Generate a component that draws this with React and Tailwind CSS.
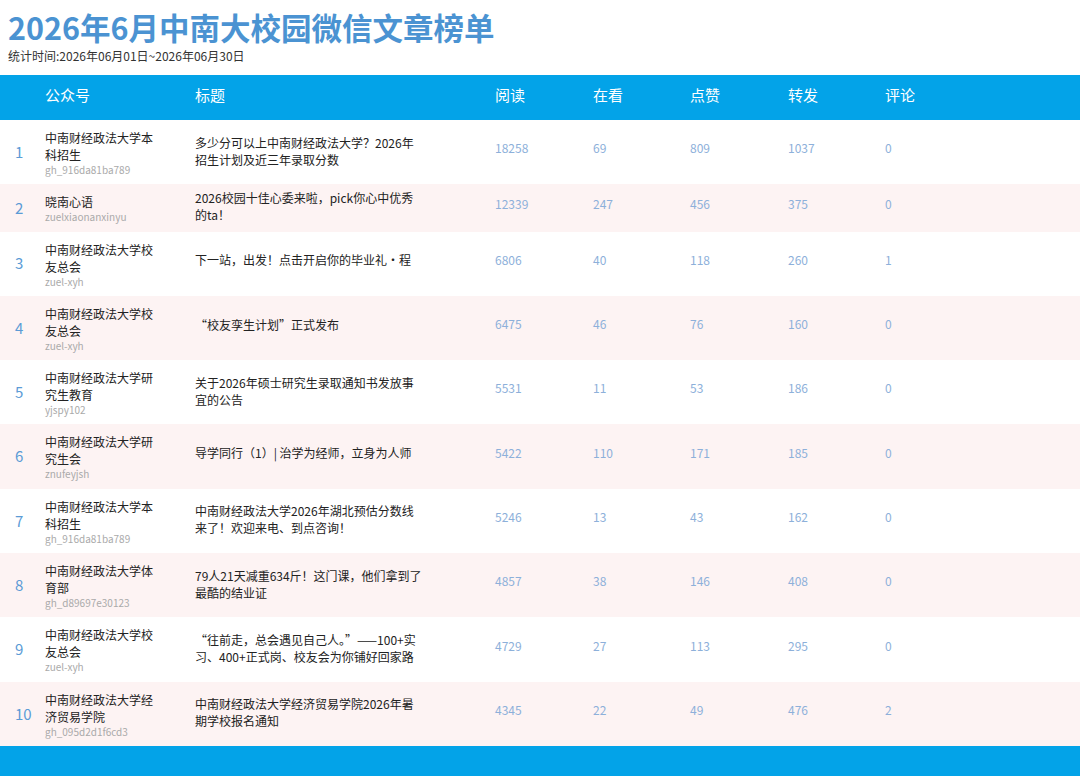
import React from 'react';

const rows = [
    { name: ['中南财经政法大学本', '科招生'], id: 'gh_916da81ba789', title: ['多少分可以上中南财经政法大学？2026年', '招生计划及近三年录取分数'], nums: [18258, 69, 809, 1037, 0] },
    { name: ['晓南心语'], id: 'zuelxiaonanxinyu', title: ['2026校园十佳心委来啦，pick你心中优秀', '的ta！'], nums: [12339, 247, 456, 375, 0] },
    { name: ['中南财经政法大学校', '友总会'], id: 'zuel-xyh', title: ['下一站，出发！点击开启你的毕业礼·程'], nums: [6806, 40, 118, 260, 1] },
    { name: ['中南财经政法大学校', '友总会'], id: 'zuel-xyh', title: ['\u201C校友孪生计划\u201D正式发布'], nums: [6475, 46, 76, 160, 0] },
    { name: ['中南财经政法大学研', '究生教育'], id: 'yjspy102', title: ['关于2026年硕士研究生录取通知书发放事', '宜的公告'], nums: [5531, 11, 53, 186, 0] },
    { name: ['中南财经政法大学研', '究生会'], id: 'znufeyjsh', title: ['导学同行（1）| 治学为经师，立身为人师'], nums: [5422, 110, 171, 185, 0] },
    { name: ['中南财经政法大学本', '科招生'], id: 'gh_916da81ba789', title: ['中南财经政法大学2026年湖北预估分数线', '来了！欢迎来电、到点咨询！'], nums: [5246, 13, 43, 162, 0] },
    { name: ['中南财经政法大学体', '育部'], id: 'gh_d89697e30123', title: ['79人21天减重634斤！这门课，他们拿到了', '最酷的结业证'], nums: [4857, 38, 146, 408, 0] },
    { name: ['中南财经政法大学校', '友总会'], id: 'zuel-xyh', title: ['\u201C往前走，总会遇见自己人。\u201D——100+实', '习、400+正式岗、校友会为你铺好回家路'], nums: [4729, 27, 113, 295, 0] },
    { name: ['中南财经政法大学经', '济贸易学院'], id: 'gh_095d2d1f6cd3', title: ['中南财经政法大学经济贸易学院2026年暑', '期学校报名通知'], nums: [4345, 22, 49, 476, 2] },
];

const heads = ['阅读', '在看', '点赞', '转发', '评论'];

const App = () => {
    return (
        <div className="w-[1080px] h-[776px] bg-white overflow-hidden font-['Noto_Sans_CJK_SC','Noto_Sans',sans-serif]">
            {/* Heading */}
            <div className="h-[75px] px-[8px] pt-[7px]">
                <h1 className="text-[30.5px] leading-[40px] font-bold text-[#4b93d2]">2026年6月中南大校园微信文章榜单</h1>
                <p className="mt-[1px] text-[12px] leading-[16px] text-[#333]">统计时间:2026年06月01日~2026年06月30日</p>
            </div>

            {/* Table header */}
            <div className="grid grid-cols-[45px_150px_300px_98px_97px_98px_97px_1fr] h-[45px] items-center pt-[5px] bg-[#03a3e8] text-white text-[15px]">
                <div />
                <div>公众号</div>
                <div>标题</div>
                {heads.map((h) => (
                    <div key={h}>{h}</div>
                ))}
                <div />
            </div>

            {/* Rows */}
            {rows.map((r, i) => (
                <div
                    key={i}
                    className={`grid grid-cols-[45px_150px_300px_98px_97px_98px_97px_1fr] items-center ${i % 2 === 1 ? 'bg-[#fdf3f3]' : 'bg-white'}`}
                >
                    <div className="pl-[15px] text-[15px] text-[#5b9bd6]">{i + 1}</div>
                    <div className="pt-[9px] pb-[7.3px]">
                        {r.name.map((n, j) => (
                            <div key={j} className="text-[12px] leading-[17px] text-[#222]">{n}</div>
                        ))}
                        <div className="text-[10px] leading-[14px] text-[#aaa]">{r.id}</div>
                    </div>
                    <div className={r.title.length > 1 ? 'pb-[3px]' : 'pb-[8px]'}>
                        {r.title.map((t, j) => (
                            <div key={j} className="text-[12px] leading-[17px] text-[#222] whitespace-nowrap">{t}</div>
                        ))}
                    </div>
                    {r.nums.map((n, j) => (
                        <div key={j} className="pb-[8px] text-[12px] text-[#8db0da]">{n}</div>
                    ))}
                    <div />
                </div>
            ))}

            {/* Footer bar */}
            <div className="h-[30px] bg-[#03a3e8]" />
        </div>
    );
};

export default App;
